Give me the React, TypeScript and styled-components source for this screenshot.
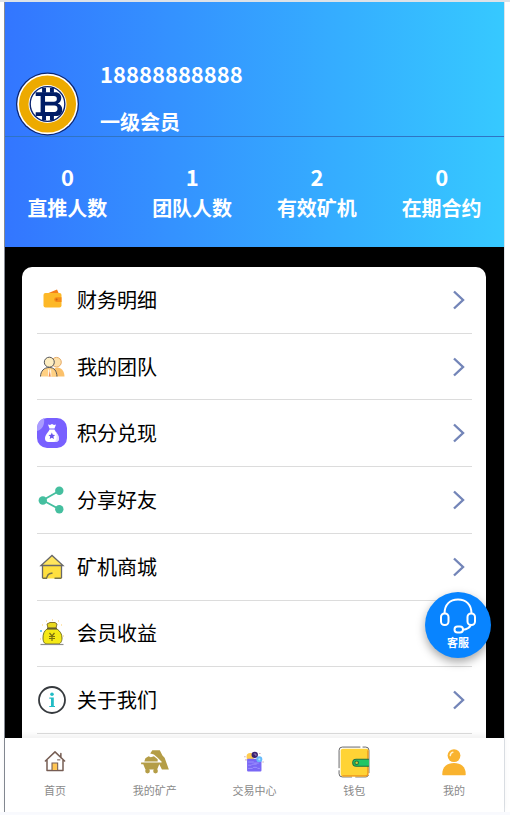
import React from "react";
import styled, { createGlobalStyle } from "styled-components";

const GlobalStyle = createGlobalStyle`
  * { box-sizing: border-box; }
  html, body, #root { height: 100%; }
  body {
    margin: 0;
    background: #f9fafe;
    font-family: "Noto Sans CJK SC", "Noto Sans", sans-serif;
    color: #000;
  }
  svg { display: block; }
`;

const Page = styled.div`
  height: 100%;
  padding: 0 5px 3px 4px;
  border-top: 2px solid #dde2e8;
  background: linear-gradient(#fff, #fff) top / 100% calc(100% - 3px) no-repeat;
`;

const Frame = styled.div`
  position: relative;
  height: 100%;
  display: flex;
  flex-direction: column;
  border-left: 1px solid #868b94;
  border-right: 1px solid #dfe3e8;
  background: #000;
`;

const Content = styled.main`
  flex: 1;
  min-height: 0;
  overflow: hidden;
`;

const Header = styled.header`
  background: linear-gradient(90deg, #3376ff, #36c9ff);
  color: #fff;
  font-weight: 700;
`;

const Profile = styled.section`
  display: flex;
  align-items: flex-end;
  gap: 20px;
  height: 135px;
  border-bottom: 1px solid #2f74c4;
  padding-left: 10px;
`;

const Identity = styled.div`
  display: flex;
  flex-direction: column;
  gap: 19px;
`;

const Phone = styled.h1`
  margin: 0;
  font-size: 22px;
  line-height: 32px;
`;

const Level = styled.p`
  margin: 0;
  font-size: 20px;
  line-height: 28px;
`;

const Stats = styled.dl`
  display: grid;
  grid-template-columns: repeat(4, 1fr);
  margin: 0;
  padding: 22px 0 24px;
`;

const Stat = styled.div`
  display: flex;
  flex-direction: column-reverse;
  text-align: center;
`;

const StatLabel = styled.dt`
  font-size: 20px;
  line-height: 30px;
`;

const StatValue = styled.dd`
  margin: 0;
  font-size: 22px;
  line-height: 34px;
`;

const Card = styled.nav`
  margin: 20px 18px 0 17px;
  padding: 0 14px 20px 15px;
  border-radius: 10px;
  background: #fff;
`;

const Menu = styled.ul`
  display: grid;
  grid-auto-rows: 1fr;
  min-height: 467px;
  margin: 0;
  padding: 0;
  list-style: none;
`;

const MenuItem = styled.li`
  display: flex;
  border-bottom: 1px solid #dcdcdc;
`;

const MenuLink = styled.a`
  flex: 1;
  display: flex;
  align-items: center;
  gap: 10px;
  padding-right: 7px;
  color: #000;
  font-size: 20px;
  line-height: 30px;
  text-decoration: none;

  svg:last-child { margin-left: auto; }
`;

const TabBar = styled.nav`
  position: relative;
  display: grid;
  grid-template-columns: repeat(5, 1fr);
  height: 74px;
  background: #fff;
  box-shadow: 0 -3px 6px rgba(0, 0, 0, 0.06);
`;

const Tab = styled.a`
  display: flex;
  flex-direction: column;
  align-items: center;
  gap: 2px;
  padding-top: 8px;
  color: #8a8a8a;
  font-size: 11px;
  line-height: 20px;
  text-decoration: none;
`;

const Support = styled.button`
  position: absolute;
  right: 13px;
  bottom: 154px;
  width: 66px;
  height: 66px;
  display: flex;
  flex-direction: column;
  align-items: center;
  padding: 6px 0 0;
  border: 0;
  border-radius: 50%;
  background: #0884ff;
  box-shadow: 0 4px 10px rgba(0, 0, 0, 0.35);
  color: #fff;
  font: 700 11px/16px "Noto Sans CJK SC", sans-serif;
  cursor: pointer;
`;

const Icon = ({ size = 30, children }: { size?: number; children: React.ReactNode }) => (
  <svg width={size} height={size} viewBox="0 0 30 30" fill="none" aria-hidden="true">
    {children}
  </svg>
);

const CoinAvatar = () => (
  <svg width="65" height="64" viewBox="0 0 65 65" aria-hidden="true">
    <circle cx="32.5" cy="32.5" r="32" fill="#0b2470" />
    <circle cx="32.5" cy="32.5" r="30.7" fill="#fff" />
    <circle cx="32.5" cy="32.5" r="29" fill="#edaa00" />
    <circle cx="32.5" cy="32.5" r="19.3" fill="#fff" />
    <circle cx="32.5" cy="32.5" r="17.6" fill="#fff" stroke="#0b2470" strokeWidth="1.4" />
    <path
      d="M20.5 20.500h20c3.500 0 6 2.400 6 5.700 0 3-1.500 5.100-3.700 5.900 2.900.7 4.700 3 4.700 6.200 0 4-2.700 6.500-6.500 6.500H20.500v-3.800h5V24.300h-5z"
      fill="#001c66"
    />
    <path d="M30 24.500h9c1.900 0 3 1 3 2.800s-1.100 2.800-3 2.800h-9zm0 9.500h9.500c2 0 3.200 1.200 3.200 3.200s-1.200 3.300-3.200 3.300H30z" fill="#fff" />
    <path d="M29 16v5m8-5v5m-8 23v5m8-5v5" stroke="#001c66" strokeWidth="4" />
  </svg>
);

const Chevron = () => (
  <svg width="12" height="20" viewBox="0 0 12 20" fill="none" aria-hidden="true">
    <path d="M1 1.5 10 10 1 18.5" stroke="#7385b8" strokeWidth="2.4" />
  </svg>
);

const FinanceIcon = () => (
  <Icon>
    <path d="M11.5 8 20 4.5l1.8 4z" fill="#f57f17" />
    <rect x="6.5" y="8" width="18" height="14.5" rx="2" fill="#fdb827" />
    <path d="M24.5 12.3h-5a2.3 2.3 0 0 0 0 4.6h5z" fill="#f58a16" />
    <circle cx="19.6" cy="14.6" r="1" fill="#c76617" />
  </Icon>
);

const TeamIcon = () => (
  <Icon>
    <path d="M14 24.5c0-5 2.5-9 6.5-9s6.800 3.500 7 9z" fill="#fbc16b" />
    <circle cx="19.5" cy="10.2" r="4.8" fill="#fde0aa" stroke="#e5aa67" />
    <path d="M3.5 24.5c.2-5.5 3.5-9 8.7-9s7.5 3.5 7.8 9" fill="#ffd083" stroke="#55565a" />
    <path d="m11 16.500 1.500 2.500 1.500-2.500.5 8h-3.500z" fill="#fff4df" />
    <path d="m12.700 18.500 1 6h-2z" fill="#ee8652" />
    <circle cx="12.3" cy="10.2" r="5" fill="#fdedc1" stroke="#55565a" />
  </Icon>
);

const CashIcon = () => (
  <Icon>
    <rect width="30" height="30" rx="10" fill="#7860ff" />
    <path d="M0 13V9.5A9.5 9.5 0 0 1 7 .3C8 7 5 12 0 13" fill="#aa9cff" />
    <path d="m11 6.5 2 .5 2-1 2 1 2-.5-1.5 4h-5zM12.5 11.5h5c.5 2 4.5 5 4.5 9 0 2.2-1.2 3.5-3.5 3.5h-7C9.2 24 8 22.700 8 20.5c0-4 4-7 4.5-9" fill="#fff" />
    <path d="m14.8 14.5 1 2.3 2.4.2-1.8 1.6.6 2.4-2.2-1.3-2.1 1.3.5-2.4-1.8-1.6 2.5-.2z" fill="#6854ed" />
    <path d="M18 12c1.2 3 4 5 4 8.5 0 2.2-1.2 3.5-3.5 3.5h-2c4-1 4-6 1.5-12" fill="#d8d1ff" opacity=".7" />
  </Icon>
);

const ShareIcon = () => (
  <Icon>
    <path d="M22.5 5.8 5.7 15.3l16.8 9" stroke="#45bf9f" strokeWidth="1.8" />
    <circle cx="22.3" cy="5.8" r="4.2" fill="#45bf9f" />
    <circle cx="5.8" cy="15.5" r="4.2" fill="#45bf9f" />
    <circle cx="22.3" cy="24.2" r="4.2" fill="#45bf9f" />
  </Icon>
);

const StoreIcon = () => (
  <Icon>
    <path d="M5.5 13.5v13h19v-13z" fill="#ffe03f" />
    <path d="m4 13.5 11-10 11 10z" fill="#ffe55d" />
    <path d="M5.5 26V13.5M24.5 26V13.5M4 13.5h22L15 3.5z" stroke="#68686a" strokeWidth="1.3" />
    <path d="M5.5 26.3h4c.8-2.3 1-4 3-4.5l3-.8M17.5 26.3h7" stroke="#77734c" strokeWidth="1.4" />
  </Icon>
);

const EarningsIcon = () => (
  <Icon>
    <path d="M10 11h10c3 2 5 5 5 9 0 4-2 6-4 6H10c-3 0-4-3-4-6 0-4 1-7 4-9" fill="#f5e916" stroke="#777526" />
    <path d="m11 10-1-4 3-1.5h5L20 6l-1 4z" fill="#e9d91e" stroke="#86742a" />
    <path d="M10 10.5h10" stroke="#635c2c" strokeWidth="1.6" />
    <path d="m12.5 15 2.5 3 2.5-3M15 18v5m-3-4.5h6m-6 2h6" stroke="#7b6f12" strokeWidth="1.2" />
    <path d="M3.5 26.5h23" stroke="#8c8c8c" strokeWidth="1.2" />
    <path d="M5 7h1m3-4h1m5-1h1m5 1h1m2 4h1M3 21h1m22-3h1" stroke="#ffcf6b" />
    <path d="M3 13h2" stroke="#74c9fb" strokeWidth="2" />
  </Icon>
);

const AboutIcon = () => (
  <Icon>
    <circle cx="15" cy="15" r="13" stroke="#363a3e" strokeWidth="1.8" />
    <circle cx="15" cy="9.2" r="1.8" fill="#22bcc5" />
    <path d="M12.3 12.5h4.5V21H18v1h-5.7v-1H14v-7.3h-1.7z" fill="#22bcc5" />
  </Icon>
);

const HomeIcon = () => (
  <Icon size={32}>
    <path d="m6 14 9-8.5 9 8.5M7.5 13v10h15V13M20.5 11V7" stroke="#765d53" strokeWidth="1.4" strokeLinecap="round" strokeLinejoin="round" />
    <path d="M12.2 23v-7h5.3v7z" fill="#ffc654" stroke="#765d53" />
    <path d="M17 13h3" stroke="#765d53" />
  </Icon>
);

const MineIcon = () => (
  <Icon size={32}>
    <path d="m10.5 7 2-3h7l2.5 5 2 2 4 11h-6.5L19 17l2.500-2-4-4-3.500-3z" fill="#b49d46" />
    <path d="m5 14.500 1-3 3-2 2 1 3-1 3.500 3v2zM2 15.500h18.500V17H19l-2 5H6l-2-5H2z" fill="#b49d46" />
    <circle cx="8" cy="23.500" r="2.200" fill="#b49d46" />
    <circle cx="15.500" cy="23.500" r="2.200" fill="#b49d46" />
  </Icon>
);

const TradeIcon = () => (
  <Icon size={32}>
    <circle cx="11.5" cy="10" r="3.5" fill="#ffcc50" />
    <rect x="8.5" y="12" width="13.5" height="12" rx="1" fill="#7967f5" />
    <circle cx="15.7" cy="8.3" r="3" fill="#392173" />
    <path d="M14.8 7.5h2v2" stroke="#be9cc5" strokeWidth=".7" />
    <circle cx="20" cy="12.5" r="2.8" fill="#66bbfb" />
    <circle cx="20" cy="12.5" r="1" fill="#b2e5ff" />
    <path d="M9.5 15h5l1 1h4M9.5 18h3l1-1h4M9.5 21h4l1-1h3l1 1h2" stroke="#a398ff" strokeWidth=".8" />
    <path d="M6 10h1m0 3h1M20 7h1m2 8h1" stroke="#b98b9f" />
  </Icon>
);

const WalletIcon = () => (
  <Icon size={32}>
    <rect x="1" y="1" width="28" height="28" rx="3" fill="#fff" stroke="#4d4e50" strokeWidth=".8" strokeDasharray="17 2 29 2 13 3" />
    <path d="M2.5 4a2 2 0 0 1 2-1.5H27A1.5 1.5 0 0 1 28.5 4v22a2.500 2.500 0 0 1-2.500 2.500H5A2.500 2.500 0 0 1 2.500 26z" fill="#ffd335" />
    <path d="M4 28h22a2 2 0 0 0 2-2V4" stroke="#ef971d" strokeWidth="1.2" />
    <path d="M29 12.5H17a3.2 3.2 0 0 0 0 6.400h12" fill="#22c665" stroke="#217044" />
    <circle cx="17.5" cy="15.7" r="1.7" fill="#d9c732" stroke="#217044" />
  </Icon>
);

const UserIcon = () => (
  <Icon size={32}>
    <circle cx="15" cy="9" r="6" fill="#f9b32f" />
    <path d="M4 26.5C4 19.5 8.7 16 15 16s11 3.5 11 10.5c0 .7-.3 1-1 1H5c-.7 0-1-.3-1-1" fill="#f9b32f" />
    <path d="M11.5 9A3.6 3.6 0 0 1 14 5.8" stroke="#fff3d4" strokeWidth="1.3" strokeLinecap="round" />
  </Icon>
);

const HeadsetIcon = () => (
  <svg width="38" height="36" viewBox="0 0 38 36" fill="none" stroke="#fff" strokeWidth="2" aria-hidden="true">
    <path d="M5.5 15.5c0-9 5.5-14 13.5-14s13.5 5 13.500 14" />
    <rect x="2" y="15.5" width="7.5" height="11.5" rx="3.5" />
    <rect x="28.5" y="15.5" width="7.5" height="11.5" rx="3.5" />
    <path d="M32 27c-1.5 2.8-4 4.3-8 4.800" />
    <rect x="15.5" y="28.5" width="8.5" height="6" rx="3" />
  </svg>
);

const stats = [
  { label: "直推人数", value: 0 },
  { label: "团队人数", value: 1 },
  { label: "有效矿机", value: 2 },
  { label: "在期合约", value: 0 },
];

const menu = [
  { label: "财务明细", Glyph: FinanceIcon },
  { label: "我的团队", Glyph: TeamIcon },
  { label: "积分兑现", Glyph: CashIcon },
  { label: "分享好友", Glyph: ShareIcon },
  { label: "矿机商城", Glyph: StoreIcon },
  { label: "会员收益", Glyph: EarningsIcon },
  { label: "关于我们", Glyph: AboutIcon },
];

const tabs = [
  { label: "首页", Glyph: HomeIcon },
  { label: "我的矿产", Glyph: MineIcon },
  { label: "交易中心", Glyph: TradeIcon },
  { label: "钱包", Glyph: WalletIcon },
  { label: "我的", Glyph: UserIcon },
];

export default function App() {
  return (
    <Page>
      <GlobalStyle />
      <Frame>
        <Content>
          <Header>
            <Profile>
              <CoinAvatar />
              <Identity>
                <Phone>18888888888</Phone>
                <Level>一级会员</Level>
              </Identity>
            </Profile>
            <Stats>
              {stats.map(({ label, value }) => (
                <Stat key={label}>
                  <StatLabel>{label}</StatLabel>
                  <StatValue>{value}</StatValue>
                </Stat>
              ))}
            </Stats>
          </Header>
          <Card>
            <Menu>
              {menu.map(({ label, Glyph }) => (
                <MenuItem key={label}>
                  <MenuLink href="#">
                    <Glyph />
                    {label}
                    <Chevron />
                  </MenuLink>
                </MenuItem>
              ))}
            </Menu>
          </Card>
        </Content>
        <TabBar>
          {tabs.map(({ label, Glyph }) => (
            <Tab key={label} href="#">
              <Glyph />
              {label}
            </Tab>
          ))}
        </TabBar>
        <Support type="button">
          <HeadsetIcon />
          客服
        </Support>
      </Frame>
    </Page>
  );
}
